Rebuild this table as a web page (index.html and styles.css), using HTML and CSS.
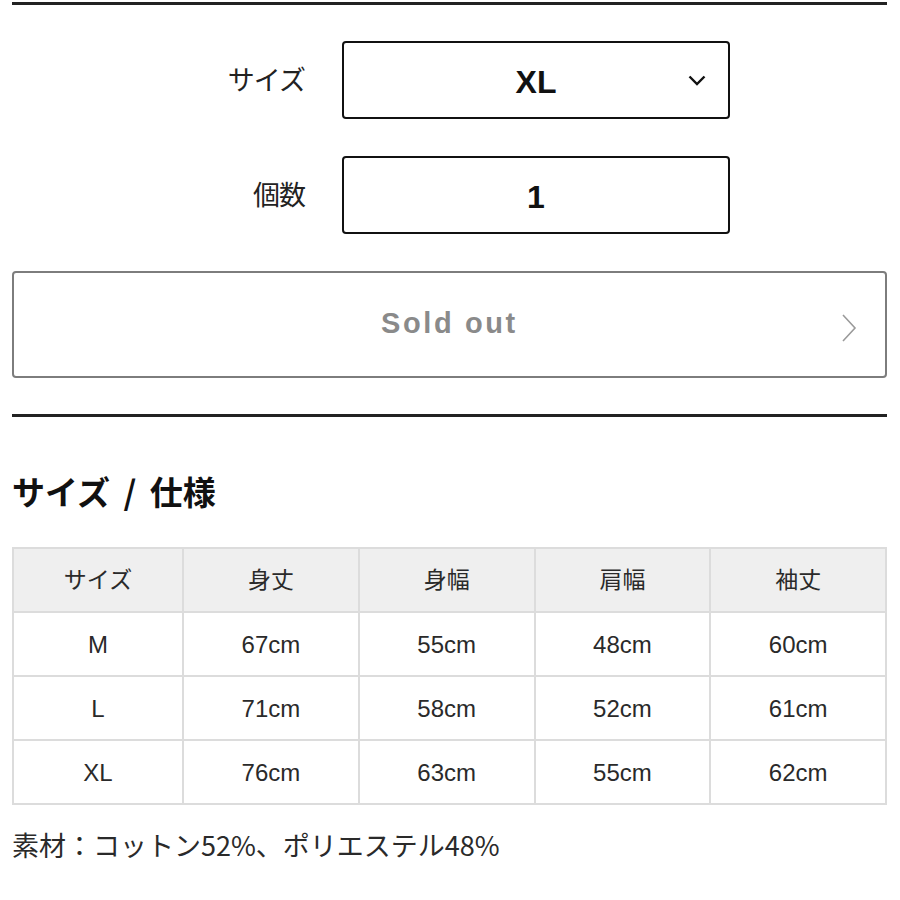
FILE: index.html
```html
<!DOCTYPE html>
<html lang="ja">
<head>
<meta charset="utf-8">
<link rel="stylesheet" href="styles.css">
</head>
<body>
<div class="rule rule-top"></div>
<div class="form">
  <div class="form-row">
    <div class="form-label">サイズ</div>
    <div class="field field-select">
      <span class="field-value">XL</span>
      <svg class="select-chevron" width="18" height="11" viewBox="0 0 18 11"><path d="M1.5 1.5 L9 9 L16.5 1.5" fill="none" stroke="#111" stroke-width="2.4"/></svg>
    </div>
  </div>
  <div class="form-row">
    <div class="form-label">個数</div>
    <div class="field">
      <span class="field-value">1</span>
    </div>
  </div>
</div>
<div class="soldout">
  <span class="soldout-text">Sold out</span>
  <svg class="soldout-chevron" width="16" height="28" viewBox="0 0 16 28"><path d="M2 1 L14 14 L2 27" fill="none" stroke="#9a9a9a" stroke-width="1.6"/></svg>
</div>
<div class="rule rule-mid"></div>
<h2 class="spec-title">サイズ / 仕様</h2>
<table class="spec-table">
  <colgroup><col class="col-first"><col><col><col><col></colgroup>
  <thead>
    <tr><th>サイズ</th><th>身丈</th><th>身幅</th><th>肩幅</th><th>袖丈</th></tr>
  </thead>
  <tbody>
    <tr><td>M</td><td>67cm</td><td>55cm</td><td>48cm</td><td>60cm</td></tr>
    <tr><td>L</td><td>71cm</td><td>58cm</td><td>52cm</td><td>61cm</td></tr>
    <tr><td>XL</td><td>76cm</td><td>63cm</td><td>55cm</td><td>62cm</td></tr>
  </tbody>
</table>
<p class="material">素材：コットン52%、ポリエステル48%</p>
</body>
</html>
```
FILE: styles.css
```css
* { box-sizing: border-box; }
html, body { background: #fff; }
body {
  margin: 0 13px 0 12px;
  font-family: "Liberation Sans", "Noto Sans CJK JP", sans-serif;
  color: #111;
}
.rule { background: #222; }
.rule-top { height: 3px; margin-top: 2px; }
.rule-mid { height: 3px; margin-top: 36px; }

.form {
  display: flex;
  flex-direction: column;
  gap: 37px;
  padding-top: 36px;
}
.form-row {
  display: flex;
  align-items: center;
}
.form-label {
  width: 293px;
  text-align: right;
  font-family: "Noto Sans CJK JP", sans-serif;
  font-size: 27px;
  color: #222;
  margin-right: 37px;
  margin-top: -3px;
  letter-spacing: -1px;
}
.field {
  position: relative;
  width: 388px;
  height: 78px;
  border: 2px solid #111;
  border-radius: 4px;
  display: flex;
  align-items: center;
  justify-content: center;
}
.field-value {
  font-family: "Liberation Sans", sans-serif;
  font-weight: bold;
  font-size: 32px;
  color: #111;
  margin-top: 4px;
}
.select-chevron {
  position: absolute;
  right: 22px;
  top: 32px;
}

.soldout {
  position: relative;
  margin-top: 37px;
  height: 107px;
  border: 2px solid #7d7d7d;
  border-radius: 4px;
  display: flex;
  align-items: center;
  justify-content: center;
}
.soldout-text {
  font-family: "Liberation Sans", sans-serif;
  font-weight: bold;
  font-size: 29px;
  letter-spacing: 2.6px;
  color: #8a8a8a;
  margin-top: -2px;
}
.soldout-chevron {
  position: absolute;
  right: 28px;
  top: 41px;
}

.spec-title {
  margin: 54px 0 0;
  font-family: "Noto Sans CJK JP", sans-serif;
  font-weight: bold;
  font-size: 33px;
  line-height: 40px;
  word-spacing: 6px;
  color: #111;
}

.spec-table {
  margin-top: 36px;
  width: 100%;
  border-collapse: collapse;
  table-layout: fixed;
  border: 2px solid #dcdcdc;
}
.col-first { width: 170px; }
.spec-table th,
.spec-table td {
  border: 2px solid #dcdcdc;
  text-align: center;
  font-weight: normal;
  color: #2a2a2a;
  height: 64px;
  padding: 0;
}
.spec-table th {
  background: #efefef;
  font-family: "Noto Sans CJK JP", sans-serif;
  font-size: 23px;
  padding-bottom: 4px;
}
.spec-table td {
  font-family: "Liberation Sans", "Noto Sans CJK JP", sans-serif;
  font-size: 24px;
  padding-top: 2px;
}

.material {
  margin: 24px 0 0;
  font-family: "Noto Sans CJK JP", sans-serif;
  font-size: 27px;
  line-height: 32px;
  color: #2a2a2a;
  letter-spacing: 0;
}
```
